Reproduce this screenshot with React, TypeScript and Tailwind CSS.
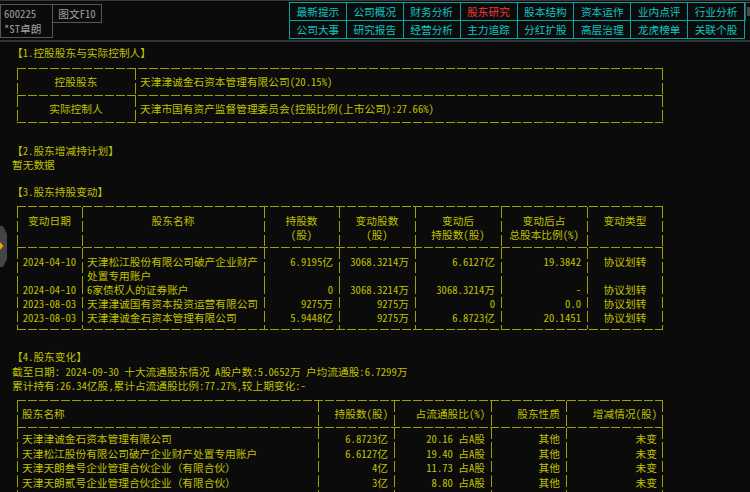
import type { ReactNode } from 'react'

// dashed "ascii table" strokes
const VL =
  'bg-[image:repeating-linear-gradient(180deg,#a0a000_0_11px,transparent_11px_14px)] bg-[length:1px_100%] bg-left bg-no-repeat'
const VLR =
  'bg-[image:repeating-linear-gradient(180deg,#a0a000_0_11px,transparent_11px_14px),repeating-linear-gradient(180deg,#a0a000_0_11px,transparent_11px_14px)] bg-[length:1px_100%] bg-[position:left_top,right_top] bg-no-repeat'

type Align = 'c' | 'l' | 'r'

const alignCls: Record<Align, string> = {
  c: 'text-center',
  l: 'text-left pl-[5px]',
  r: 'text-right pr-[6px]',
}

function HLine() {
  return <div className="h-px bg-[image:repeating-linear-gradient(90deg,#a0a000_0_9px,transparent_9px_11px)]" />
}

interface RowProps {
  grid: string
  cells: ReactNode[]
  align: Align[]
  pad?: string
}

function Row({ grid, cells, align, pad = '' }: RowProps) {
  return (
    <div className={grid}>
      {cells.map((c, i) => (
        <div
          key={i}
          className={`${i === cells.length - 1 ? VLR : VL} ${alignCls[align[i]]} ${pad} whitespace-pre-wrap`}
        >
          {c}
        </div>
      ))}
    </div>
  )
}

const NAV = [
  '最新提示', '公司概况', '财务分析', '股东研究', '股本结构', '资本运作', '业内点评', '行业分析',
  '公司大事', '研究报告', '经营分析', '主力追踪', '分红扩股', '高层治理', '龙虎榜单', '关联个股',
]

function Header() {
  return (
    <div className="flex h-[42px] border-t border-b-2 border-t-[#3a3a3a] border-b-[#333333]">
      <div className="mt-[3px] h-[34px] w-[53px] border border-[#565656] px-[3px] pt-[1px] leading-[15px] text-[#a0a0a0]">
        <div>600225</div>
        <div>*ST卓朗</div>
      </div>
      <div className="-ml-px mt-[3px] flex h-[19px] w-[50px] items-center justify-center border border-[#565656] text-[#a0a0a0]">
        图文F10
      </div>
      <div className="flex-1" />
      <div className="mt-px grid h-[37px] w-[456px] grid-cols-8 gap-px bg-[#00a4a4] p-px">
        {NAV.map((n) => (
          <div
            key={n}
            className={`flex items-center justify-center bg-[#0b0b0b] ${n === '股东研究' ? 'text-[#f03c3c]' : 'text-[#10c4c4]'}`}
          >
            {n}
          </div>
        ))}
      </div>
      <div className="mt-px h-[19px] w-[5px] border-l border-t border-[#555555] pl-px pt-[4px]">
        <div className="h-[9px] w-[3px] bg-[#4a4a4a]" />
      </div>
    </div>
  )
}

const G1 = 'grid grid-cols-[118px_528px]'
const G3 = 'grid grid-cols-[65px_182px_75px_76px_86px_86px_76px]'
const G4 = 'grid grid-cols-[301px_76px_97px_75px_97px]'

const A3: Align[] = ['c', 'l', 'r', 'r', 'r', 'r', 'c']
const A3H: Align[] = ['c', 'c', 'c', 'c', 'c', 'c', 'c']
const A4: Align[] = ['l', 'r', 'r', 'r', 'r']

const changes = [
  ['2024-04-10', '天津松江股份有限公司破产企业财产处置专用账户', '6.9195亿', '3068.3214万', '6.6127亿', '19.3842', '协议划转'],
  ['2024-04-10', '6家债权人的证券账户', '0', '3068.3214万', '3068.3214万', '-', '协议划转'],
  ['2023-08-03', '天津津诚国有资本投资运营有限公司', '9275万', '9275万', '0', '0.0', '协议划转'],
  ['2023-08-03', '天津津诚金石资本管理有限公司', '5.9448亿', '9275万', '6.8723亿', '20.1451', '协议划转'],
]

const holders = [
  ['天津津诚金石资本管理有限公司', '6.8723亿', '20.16 占A股', '其他', '未变'],
  ['天津松江股份有限公司破产企业财产处置专用账户', '6.6127亿', '19.40 占A股', '其他', '未变'],
  ['天津天朗叁号企业管理合伙企业（有限合伙）', '4亿', '11.73 占A股', '其他', '未变'],
  ['天津天朗贰号企业管理合伙企业（有限合伙）', '3亿', '8.80 占A股', '其他', '未变'],
  ['天津津诚国有资本投资运营有限公司', '9275万', '2.72 占A股', '其他', '未变'],
]

export default function App() {
  return (
    <div className="relative h-[492px] w-[750px] overflow-hidden bg-[#0b0b0b] font-['Noto_Sans_Mono_CJK_SC','Noto_Sans_CJK_SC',monospace] text-[10.7px] leading-[14px] text-[#c0c000]">
      <Header />

      <div className="pl-[12px]">
        {/* 1 */}
        <div className="mt-[4px]">【1.控股股东与实际控制人】</div>
        <div className="ml-[5px] mt-[8px] w-[646px]">
          <HLine />
          <Row grid={G1} align={['c', 'l']} pad="pt-[6px] pb-[6px]" cells={['控股股东', '天津津诚金石资本管理有限公司(20.15%)']} />
          <HLine />
          <Row
            grid={G1}
            align={['c', 'l']}
            pad="pt-[6px] pb-[6px]"
            cells={['实际控制人', '天津市国有资产监督管理委员会(控股比例(上市公司):27.66%)']}
          />
          <HLine />
        </div>

        {/* 2 */}
        <div className="mt-[21px]">【2.股东增减持计划】</div>
        <div>暂无数据</div>

        {/* 3 */}
        <div className="mt-[13px]">【3.股东持股变动】</div>
        <div className="ml-[5px] mt-[7px] w-[646px]">
          <HLine />
          <Row
            grid={G3}
            align={A3H}
            pad="pt-[7px] pb-[5px]"
            cells={[
              '变动日期',
              '股东名称',
              <>持股数<br />(股)</>,
              <>变动股数<br />(股)</>,
              <>变动后<br />持股数(股)</>,
              <>变动后占<br />总股本比例(%)</>,
              '变动类型',
            ]}
          />
          <HLine />
          {changes.map((r, i) => (
            <Row
              key={i}
              grid={G3}
              align={A3}
              pad={i === 0 ? 'pt-[7px]' : i === changes.length - 1 ? 'pb-[4px]' : ''}
              cells={r}
            />
          ))}
          <HLine />
        </div>

        {/* 4 */}
        <div className="mt-[20px]">【4.股东变化】</div>
        <div className="mt-px">截至日期：2024-09-30 十大流通股东情况 A股户数:5.0652万 户均流通股:6.7299万</div>
        <div>累计持有:26.34亿股,累计占流通股比例:77.27%,较上期变化:-</div>
        <div className="ml-[5px] mt-[7px] w-[646px] leading-[14.4px]">
          <HLine />
          <Row
            grid={G4}
            align={A4}
            pad="pt-[6px] pb-[6px]"
            cells={['股东名称', '持股数(股)', '占流通股比(%)', '股东性质', '增减情况(股)']}
          />
          <HLine />
          {holders.map((r, i) => (
            <Row key={i} grid={G4} align={A4} pad={i === 0 ? 'pt-[4px]' : ''} cells={r} />
          ))}
        </div>
      </div>

      {/* collapsed side panel handle */}
      <svg className="absolute left-0 top-[226px]" width="8" height="41" viewBox="0 0 8 41">
        <polygon points="0,0 3,0 7,8 7,33 3,41 0,41" fill="#444444" />
        <polygon points="0,16 3.5,20 0,24" fill="#eea000" />
      </svg>
    </div>
  )
}
